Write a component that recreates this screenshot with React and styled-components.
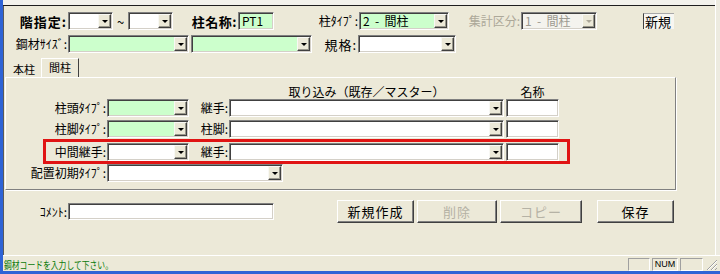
import React from 'react';
import styled, { createGlobalStyle } from 'styled-components';

const Global = createGlobalStyle`
  html, body { margin: 0; padding: 0; background: #ECE9D8; }
  body {
    font-family: "Noto Sans CJK JP", "Noto Sans", sans-serif;
    font-size: 12px;
    color: #000;
  }
  * { box-sizing: border-box; }
`;

const Frame = styled.div`
  width: 720px;
  height: 274px;
  display: flex;
  flex-direction: column;
  border-left: 3px solid #2E63D6;
  border-bottom: 3px solid #2E63D6;
  background: #ECE9D8;
  overflow: hidden;
`;

const Upper = styled.div`
  display: flex;
  height: 255px;
`;

const MainCol = styled.div`
  flex: 1;
  display: flex;
  flex-direction: column;
  box-shadow: inset 1px 0 0 #5A5A5A;
`;

const TopStrip = styled.div`
  height: 5px;
  background: #F3F2EC;
  border-bottom: 1px solid #1E1E1E;
  box-sizing: content-box;
`;

const RightEdge = styled.div`
  width: 5px;
  flex: none;
  border-left: 1px solid #FFFFFF;
  background: #EDEBE0;
`;

const MainForm = styled.div`
  flex: 1;
  display: flex;
  flex-direction: column;
  padding-top: 6px;
`;

const Row = styled.div`
  display: flex;
  align-items: center;
  flex: none;
  height: ${p => p.$h || 18}px;
  margin-top: ${p => p.$mt || 0}px;
`;

const Label = styled.span`
  flex: none;
  width: ${p => p.$w}px;
  margin-right: 1px;
  text-align: right;
  white-space: nowrap;
  line-height: 1;
  font-size: ${p => p.$size || 12}px;
  font-weight: ${p => (p.$bold ? 700 : 400)};
  letter-spacing: ${p => p.$ls || 0}px;
  color: ${p => (p.$disabled ? '#ACA899' : '#000')};
`;

const Tilde = styled.span`
  flex: none;
  width: 15px;
  text-align: center;
  font-size: 13px;
  line-height: 1;
`;

const Sunken = styled.div`
  flex: none;
  display: flex;
  width: ${p => p.$w}px;
  height: ${p => p.$h || 18}px;
  margin-left: ${p => p.$ml || 0}px;
  padding: 1px;
  border-top: 1px solid #808080;
  border-left: 1px solid #808080;
  border-bottom: 1px solid #FFFFFF;
  border-right: 1px solid #FFFFFF;
  box-shadow: inset 1px 1px 0 #404040, inset -1px -1px 0 #D4D0C8;
  background: ${p => p.$bg || '#FFFFFF'};
`;

const Value = styled.span`
  flex: 1;
  display: flex;
  align-items: center;
  padding-left: 2px;
  font-size: 12px;
  line-height: 1;
  white-space: pre;
  color: ${p => (p.$disabled ? '#9C9A90' : '#000')};
`;

const DropBtn = styled.span`
  flex: none;
  width: 13px;
  height: 100%;
  display: flex;
  align-items: center;
  justify-content: center;
  background: #ECE9D8;
  border-top: 1px solid #F8F8F4;
  border-left: 1px solid #F8F8F4;
  border-right: 1px solid #404040;
  border-bottom: 1px solid #404040;
  box-shadow: inset -1px -1px 0 #9A988C;
  &::after {
    content: '';
    border-left: 3px solid transparent;
    border-right: 3px solid transparent;
    border-top: 3px solid ${p => (p.$disabled ? '#ACA899' : '#000')};
    margin-top: 1px;
  }
`;

const StaticBox = styled.div`
  flex: none;
  width: 31px;
  height: 16px;
  margin-left: ${p => p.$ml || 0}px;
  background: #F7F6F1;
  border-top: 1px solid #A8A8A8;
  border-left: 1px solid #404040;
  font-size: 13px;
  line-height: 15px;
  padding-left: 1px;
`;

const TabStrip = styled.div`
  display: flex;
  align-items: flex-end;
  height: 19px;
  margin-top: 5px;
  padding-left: 4px;
`;

const Tab = styled.div`
  flex: none;
  width: ${p => p.$w}px;
  height: ${p => (p.$active ? 19 : 16)}px;
  display: flex;
  align-items: center;
  justify-content: center;
  font-size: 11px;
  line-height: 1;
  border-top: 1px solid ${p => (p.$active ? '#FFFFFF' : 'transparent')};
  border-left: 1px solid ${p => (p.$active ? '#FFFFFF' : 'transparent')};
  border-right: 1px solid ${p => (p.$active ? '#404040' : 'transparent')};
  padding-bottom: ${p => (p.$active ? 2 : 0)}px;
`;

const Panel = styled.div`
  display: flex;
  flex-direction: column;
  margin-left: 2px;
  width: 671px;
  height: 113px;
  padding-top: 7px;
  border-top: 1px solid #FFFFFF;
  border-left: 1px solid #FFFFFF;
  border-right: 1px solid #808080;
  border-bottom: 1px solid #808080;
  box-shadow: 1px 1px 0 #FFFFFF;
`;

const HeadCell = styled.span`
  flex: none;
  width: ${p => p.$w}px;
  margin-left: ${p => p.$ml || 0}px;
  text-align: center;
  font-size: 12px;
  line-height: 1;
  white-space: nowrap;
`;

const Highlight = styled.div`
  display: flex;
  align-items: center;
  flex: none;
  margin-top: 1px;
  margin-left: 37px;
  width: 527px;
  height: 25px;
  border: 3px solid #E01414;
`;

const BottomRow = styled.div`
  display: flex;
  align-items: center;
  height: 23px;
  margin-top: 10px;
`;

const Button = styled.div`
  flex: none;
  width: ${p => p.$w}px;
  height: 23px;
  margin-left: ${p => p.$ml || 0}px;
  display: flex;
  align-items: center;
  justify-content: center;
  background: #ECE9D8;
  border-top: 1px solid #FFFFFF;
  border-left: 1px solid #FFFFFF;
  border-right: 1px solid #404040;
  border-bottom: 1px solid #404040;
  box-shadow: inset -1px -1px 0 #808080;
  font-size: 13px;
  letter-spacing: 1px;
  color: ${p => (p.$disabled ? '#B5B2A5' : '#000')};
`;

const StatusBar = styled.div`
  display: flex;
  align-items: flex-end;
  height: 16px;
  border-top: 1px solid #FFFFFF;
  padding-right: 2px;
`;

const StatusTextWrap = styled.div`
  flex: 1;
  align-self: center;
  padding-left: 1px;
  overflow: hidden;
`;

const StatusText = styled.span`
  display: inline-block;
  font-size: 10px;
  line-height: 1;
  color: #0A7A0A;
  white-space: nowrap;
  transform: scaleX(0.78);
  transform-origin: left center;
`;

const StatusPane = styled.div`
  flex: none;
  width: ${p => p.$w}px;
  height: 13px;
  margin-left: ${p => p.$ml || 0}px;
  border-top: 1px solid #A0A0A0;
  border-left: 1px solid #A0A0A0;
  border-bottom: 1px solid #FFFFFF;
  border-right: 1px solid #FFFFFF;
  font-family: "Liberation Sans", Arial, sans-serif;
  font-size: 9px;
  line-height: 11px;
  text-align: center;
`;

const Grip = styled.svg`
  flex: none;
  margin-left: 3px;
  width: 12px;
  height: 12px;
`;

function Combo({ w, bg, value, disabled, ml }) {
  return (
    <Sunken $w={w} $bg={bg} $ml={ml}>
      <Value $disabled={disabled}>{value}</Value>
      <DropBtn $disabled={disabled} />
    </Sunken>
  );
}

function Input({ w, bg, value, ml, h }) {
  return (
    <Sunken $w={w} $bg={bg} $ml={ml} $h={h}>
      <Value>{value}</Value>
    </Sunken>
  );
}

const GREEN = '#CCFFCC';

function JointRow({ label, labelW, sub, bg }) {
  return (
    <>
      <Label $w={labelW}>{label}</Label>
      <Combo w={82} bg={bg} />
      <Label $w={39}>{sub}</Label>
      <Combo w={275} />
      <Input w={53} ml={2} />
    </>
  );
}

export default function App() {
  return (
    <>
      <Global />
      <Frame>
        <Upper>
          <MainCol>
            <TopStrip />
            <MainForm>
              <Row>
                <Label $w={64} $bold $size={13} $ls={1}>階指定:</Label>
                <Combo w={45} />
                <Tilde>~</Tilde>
                <Combo w={45} />
                <Label $w={64} $bold $size={13} $ls={0.5}>柱名称:</Label>
                <Input w={36} bg={GREEN} value="PT1" />
                <Label $w={84}>柱ﾀｲﾌﾟ:</Label>
                <Combo w={90} bg={GREEN} value={'2  -  間柱'} />
                <Label $w={71} $disabled>集計区分:</Label>
                <Combo w={76} bg="#F4F3EE" value={'1  -  間柱'} disabled />
                <StaticBox $ml={46}>新規</StaticBox>
              </Row>
              <Row $mt={5}>
                <Label $w={64}>鋼材ｻｲｽﾞ:</Label>
                <Combo w={121} bg={GREEN} />
                <Combo w={121} bg={GREEN} ml={2} />
                <Label $w={45} $size={13} $ls={1}>規格:</Label>
                <Combo w={98} />
              </Row>
              <TabStrip>
                <Tab $w={34}>本柱</Tab>
                <Tab $w={38} $active>間柱</Tab>
              </TabStrip>
              <Panel>
                <Row $h={13}>
                  <HeadCell $w={275} $ml={223}>取り込み（既存／マスター）</HeadCell>
                  <HeadCell $w={53} $ml={2}>名称</HeadCell>
                </Row>
                <Row $mt={1}>
                  <JointRow label="柱頭ﾀｲﾌﾟ:" labelW={100} sub="継手:" bg={GREEN} />
                </Row>
                <Row $mt={3}>
                  <JointRow label="柱脚ﾀｲﾌﾟ:" labelW={100} sub="柱脚:" bg={GREEN} />
                </Row>
                <Highlight>
                  <JointRow label="中間継手:" labelW={60} sub="継手:" />
                </Highlight>
                <Row>
                  <Label $w={100}>配置初期ﾀｲﾌﾟ:</Label>
                  <Combo w={176} />
                </Row>
              </Panel>
              <BottomRow>
                <Label $w={64}>ｺﾒﾝﾄ:</Label>
                <Input w={206} h={17} />
                <Button $w={77} $ml={63}>新規作成</Button>
                <Button $w={80} $ml={3} $disabled>削除</Button>
                <Button $w={82} $ml={3} $disabled>コピー</Button>
                <Button $w={77} $ml={15}>保存</Button>
              </BottomRow>
            </MainForm>
          </MainCol>
          <RightEdge />
        </Upper>
        <StatusBar>
          <StatusTextWrap>
            <StatusText>鋼材コードを入力して下さい。</StatusText>
          </StatusTextWrap>
          <StatusPane $w={22} />
          <StatusPane $w={26} $ml={2}>NUM</StatusPane>
          <StatusPane $w={23} $ml={2} />
          <Grip viewBox="0 0 12 12">
            <g strokeWidth="1">
              <line x1="11" y1="1" x2="1" y2="11" stroke="#A0A0A0" />
              <line x1="11" y1="5" x2="5" y2="11" stroke="#A0A0A0" />
              <line x1="11" y1="9" x2="9" y2="11" stroke="#A0A0A0" />
              <line x1="11" y1="2" x2="2" y2="11" stroke="#FFFFFF" />
              <line x1="11" y1="6" x2="6" y2="11" stroke="#FFFFFF" />
            </g>
          </Grip>
        </StatusBar>
      </Frame>
    </>
  );
}
